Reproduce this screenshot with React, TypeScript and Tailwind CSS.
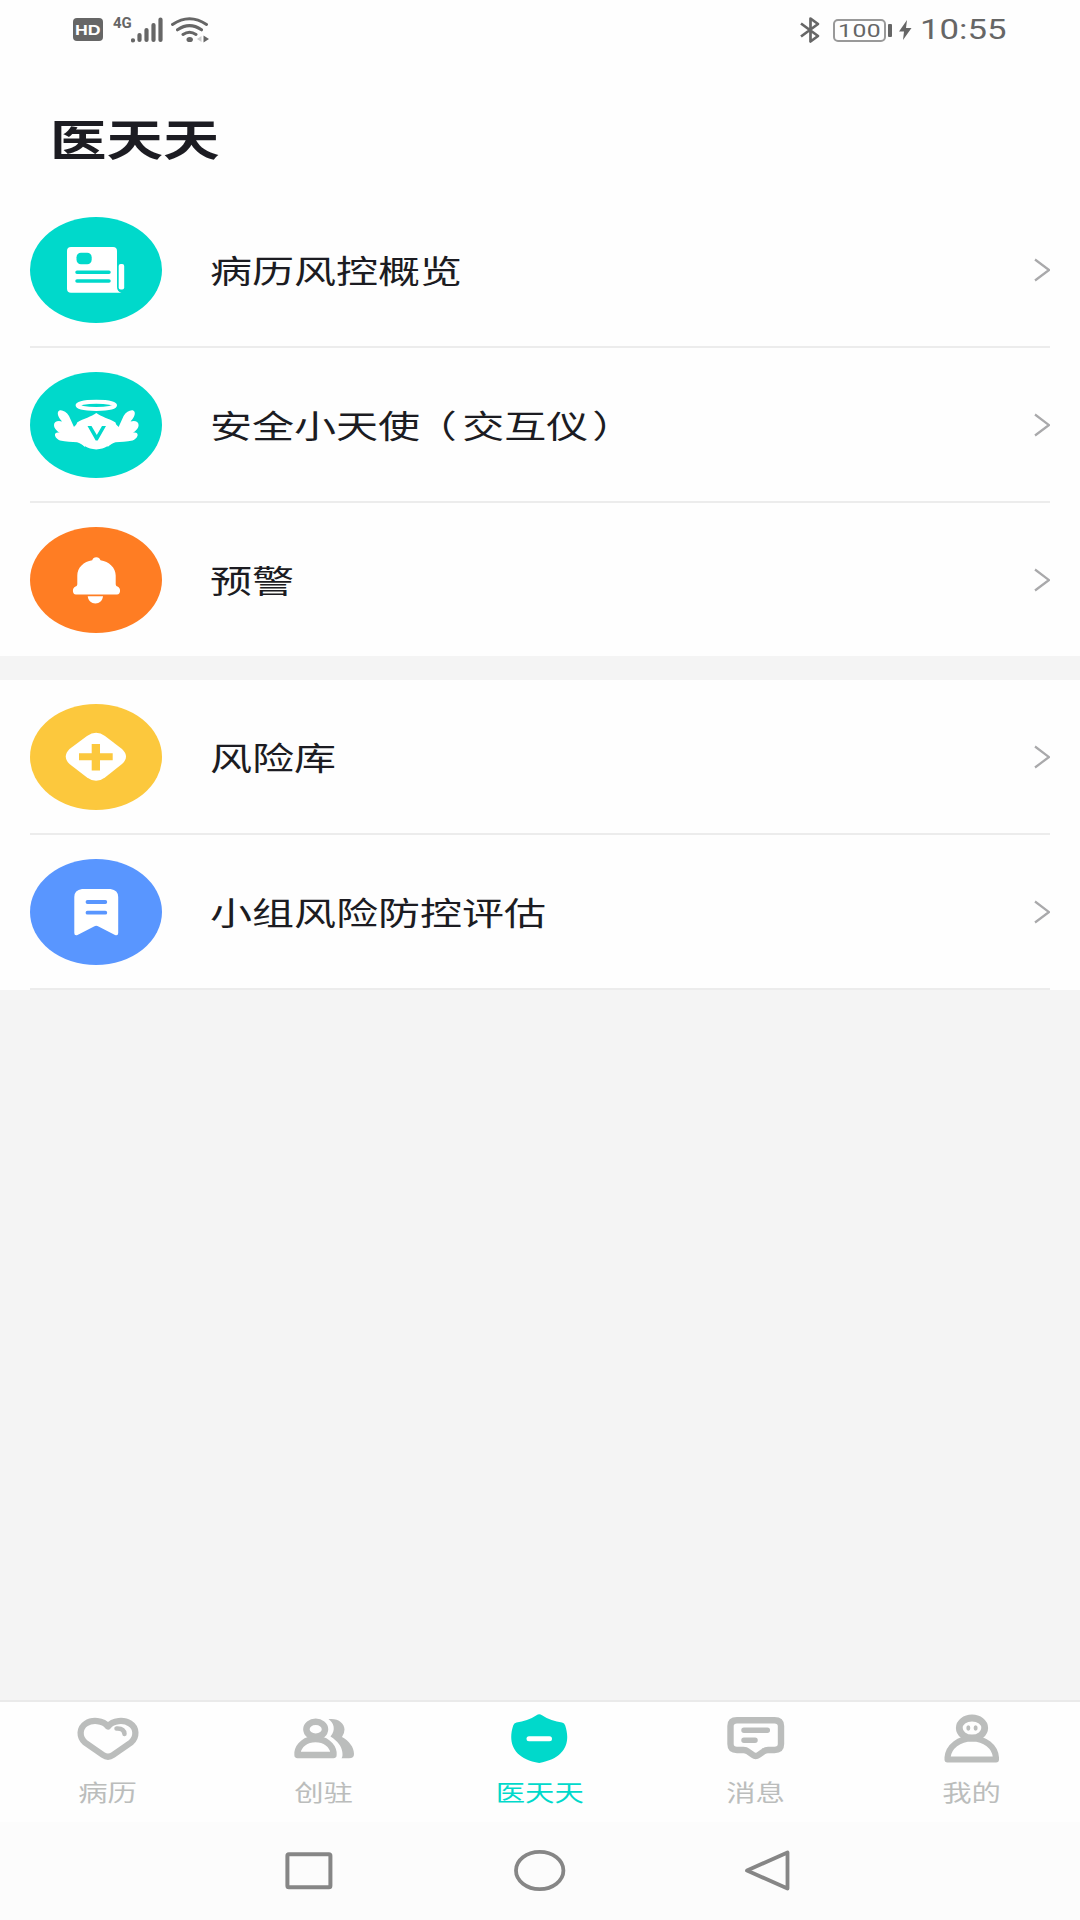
import type { ReactNode } from 'react';

const TEAL = '#00d9cb';
const GRAY = '#bbbdbc';

function DocumentIcon() {
  return (
    <>
      <path d="M41 30H83Q87 30 87 34V70Q87 74.5 91.5 75.7H41Q37 75.7 37 71.7V34Q37 30 41 30Z" fill="#fff" />
      <rect x="46.5" y="35.7" width="15.2" height="11.6" rx="4.500" fill={TEAL} />
      <path d="M47 55.3H79M47 64H79" stroke={TEAL} strokeWidth="3.500" strokeLinecap="round" />
      <rect x="88.700" y="47" width="5.500" height="25.5" rx="2" fill="#fff" />
    </>
  );
}

const WING = 'M55 49C49 50 46 52.500 44 55L39 44C36 39 29.500 36.500 28 40C27 43 29.500 46.500 32 49.500C28 48 24 49.500 24 53C24 56.500 27 59 30 61C27 60 24.500 61 25 63.500C25.500 66 28 67.500 30 68.500C36 70 42 69.500 47 70.300C50 71 52 72.500 55 75Z';

function AngelIcon() {
  return (
    <>
      <ellipse cx="66.300" cy="33.300" rx="18.700" ry="3.600" fill="none" stroke="#fff" strokeWidth="4" />
      <path d={WING} fill="#fff" />
      <path d={WING} fill="#fff" transform="translate(132.6 0) scale(-1 1)" />
      <path d="M66.3 41C71 44.8 79 46.5 85.5 50.5C90 62 84 76 66.3 77.5C48.600 76 42.600 62 47.100 50.500C53.600 46.500 61.600 44.800 66.300 41Z" fill="#fff" />
      <path d="M57.500 54H61.500L66.800 63L72 54H76L67.700 68.500H65.700Z" fill={TEAL} />
    </>
  );
}

function BellIcon() {
  return (
    <>
      <path d="M66.300 30.200C68.500 30.200 69.800 31.200 70.500 33.200C79 34.500 85.700 40.500 85.700 48.500V57C85.700 58.700 86.500 59.300 87.500 59.500C91 60.500 91 67.500 87 67.500H46C42 67.500 42 60.500 45.500 59.500C46.500 59.200 47.300 58.600 47.300 57V48.500C47.300 40.500 53.700 34.500 62.200 33.200C62.900 31.200 64 30.200 66.300 30.200Z" fill="#fff" />
      <path d="M57.700 69.300H73C72.500 73.500 69.500 76.500 65.400 76.500S58.200 73.500 57.700 69.300Z" fill="#fff" />
    </>
  );
}

function RiskIcon() {
  return (
    <>
      <path d="M57 32Q66.200 25.400 75 32L92 45Q100 52.500 92 60L75 73.500Q66.200 80.200 57 73.500L39.500 60Q32 52.500 39.500 45Z" fill="#fff" />
      <path d="M61.700 40H70V49.300H82.700V56.300H70V66.400H61.700V56.300H49V49.300H61.700Z" fill="#fcc83d" />
    </>
  );
}

function BookmarkIcon() {
  return (
    <>
      <path d="M52 30H80.500Q88.200 31 88.200 38V74Q88.200 77 85 76L68.500 67.500Q66.200 66 64 67.500L47.500 76Q44.300 77 44.300 74V38Q44.300 31 52 30Z" fill="#fff" />
      <path d="M57.500 43H75.300M57.500 53.700H75.300" stroke="#5996ff" strokeWidth="3.800" strokeLinecap="round" />
    </>
  );
}

function Row({ label, color, icon, divider = true }: { label: ReactNode; color: string; icon: ReactNode; divider?: boolean }) {
  return (
    <li className={`ml-[29.5px] mr-[30px] flex items-center ${divider ? 'h-[155px] border-b-2 border-[#ececec]' : 'h-[153px]'}`}>
      <svg className="h-[106px] w-[132px] shrink-0" viewBox="0 0 132 106" fill="none">
        <ellipse cx="66" cy="53" rx="66" ry="53" fill={color} />
        {icon}
      </svg>
      <span className="mb-[2px] ml-[48.5px] flex-1 origin-left scale-x-[1.313] whitespace-nowrap text-[32px] leading-[50px] text-[#1c1c22]">{label}</span>
      <svg className="h-6 w-4 shrink-0" viewBox="0 0 16 24" fill="none" stroke="#a9a9ab" strokeWidth="2.200">
        <path d="M1 1.500L15 12L1 22.500" />
      </svg>
    </li>
  );
}

function Tab({ label, active = false, children }: { label: string; active?: boolean; children: ReactNode }) {
  return (
    <button className={`flex flex-1 flex-col items-center pt-2 ${active ? 'text-[#00d9cb]' : 'text-[#bbbdbc]'}`}>
      <svg className="h-14 w-[72px]" viewBox="0 0 72 56" fill="none" strokeLinecap="round" strokeLinejoin="round">{children}</svg>
      <span className="mr-px mt-[7px] scale-x-[1.305] whitespace-nowrap text-[22.5px] leading-9">{label}</span>
    </button>
  );
}

function StatusBar() {
  return (
    <header className="flex h-[58px] items-center justify-between pl-[73px] pr-[75px] text-[#666]">
      <div className="flex items-center pt-px">
        <div className="flex h-[23px] w-[30px] items-center justify-center rounded-[4px] bg-[#666]">
          <span className="scale-x-[1.18] font-['Liberation_Sans'] text-[15px] font-bold leading-none text-white">HD</span>
        </div>
        <span className="-mt-[13px] ml-[10px] w-[18px] origin-left font-[Roboto] text-[15px] font-bold leading-none">4G</span>
        <svg className="h-[26px] w-[33px]" viewBox="0 0 33 26" stroke="currentColor" strokeWidth="4.200" strokeLinecap="round">
          <path d="M2 23.300V23.500M8.500 18V23M15.500 13V23M22.500 8V23M29.500 2.500V23" />
        </svg>
        <svg className="ml-[7px] h-[26px] w-[39px]" viewBox="0 0 39 26" fill="none" stroke="currentColor" strokeWidth="3" strokeLinecap="round">
          <path d="M1.500 7.500Q18.500-4 35.500 7.500M6.500 12.800Q18.500 4.500 30.500 12.800M12 17.500Q18.500 13 25 17.500" />
          <ellipse cx="18.700" cy="22.500" rx="3.200" ry="2.600" fill="currentColor" stroke="none" />
          <path d="M30.500 19V25L26 22Z" fill="#ccc" stroke="none" />
          <path d="M32.500 18.500V25.500L38 22Z" fill="currentColor" stroke="none" />
        </svg>
      </div>
      <div className="flex items-center pt-[2px]">
        <svg className="h-[28px] w-[20px]" viewBox="0 0 20 28" fill="none" stroke="currentColor" strokeWidth="2.700" strokeLinejoin="round">
          <path d="M1 7.500L18 20L10.500 25.500V2.500L18 8L1 20.500" />
        </svg>
        <div className="ml-[13px] flex h-[23px] w-[53px] items-center justify-center rounded-[5px] border-2 border-[#999]">
          <span className="scale-x-[1.300] font-[Roboto] text-[19px] leading-none tracking-[0.400px]">100</span>
        </div>
        <div className="ml-[2px] h-[13px] w-[4px] rounded-[1px] bg-[#666]" />
        <svg className="ml-[7px] h-[20px] w-[13px]" viewBox="0 0 13 20" fill="currentColor">
          <path d="M8 0L0 11.500H5L4 20L12.500 8H7Z" />
        </svg>
        <span className="ml-[8px] w-[85px] origin-left scale-x-[1.240] font-[Roboto] text-[28px] leading-none">10:55</span>
      </div>
    </header>
  );
}

export default function App() {
  return (
    <div className="flex h-[1920px] w-[1080px] flex-col overflow-hidden bg-[#f4f4f4] font-['Noto_Sans_CJK_SC',sans-serif]">
      <section className="bg-[#fefefe]">
        <StatusBar />
        <h1 className="flex h-[135px] items-center pb-[9px] pl-[50px] pt-[33px]">
          <span className="origin-left scale-x-[1.300] text-[43.5px] font-bold leading-none text-[#1c1c22]">医天天</span>
        </h1>
        <ul>
          <Row label="病历风控概览" color={TEAL} icon={<DocumentIcon />} />
          <Row
            label={
              <>
                安全小天使
                <span className="inline-block pl-3 pr-1 [font-feature-settings:'halt']">（</span>
                交互仪
                <span className="inline-block pl-[3px] [font-feature-settings:'halt']">）</span>
              </>
            }
            color={TEAL}
            icon={<AngelIcon />}
          />
          <Row label="预警" color="#ff7d23" icon={<BellIcon />} divider={false} />
        </ul>
      </section>
      <ul className="mt-6 bg-[#fefefe]">
        <Row label="风险库" color="#fcc83d" icon={<RiskIcon />} />
        <Row label="小组风险防控评估" color="#5996ff" icon={<BookmarkIcon />} />
      </ul>
      <nav className="mt-auto flex h-[122px] border-t-2 border-[#eaeaea] bg-[#fefefe]">
        <Tab label="病历">
          <path d="M36 16.500C31 10 20 9.500 14 13.500C7 18 7 27 13 32.500L31 45Q36 48.500 41 45L59 32.500C65 27 65 18 58 13.500C52 9.500 41 10 36 16.500Z" stroke={GRAY} strokeWidth="6.300" />
          <path d="M44.500 18.500Q52 18 52.500 24" stroke={GRAY} strokeWidth="4.500" />
        </Tab>
        <Tab label="创驻">
          <ellipse cx="27.700" cy="19.300" rx="9.300" ry="7.500" stroke={GRAY} strokeWidth="6.500" />
          <path d="M9.500 45V42.500C10.500 35 18 29 27.500 29S44.500 35 45.500 42.500V45Z" stroke={GRAY} strokeWidth="6.300" />
          <path d="M40.500 9.300C50 8 56.500 13.500 56.500 19.500Q56.500 23.500 54 27C61 31 66 37 66 44Q66 48.300 61 48.300H53.500Q55 46.500 54.300 42C53.500 36 50 31.500 42.500 26.500C48 20 46 13 40.500 9.300Z" fill={GRAY} />
        </Tab>
        <Tab label="医天天" active>
          <path d="M32.500 5.200Q35.200 3.500 38 5.200C44 9.300 51 11.500 58 12.500Q60.500 13 61.200 15.500C67 33 61 48.500 35.200 53C9.500 48.500 3.500 33 9.200 15.500Q10 13 12.500 12.500C19.500 11.500 26.500 9.300 32.500 5.200Z" fill={TEAL} />
          <path d="M25 28.700H45.500" stroke="#fff" strokeWidth="5" />
        </Tab>
        <Tab label="消息">
          <path d="M17 10.200H54.500Q61 10.200 61 16V34Q61 40 54.500 40H48Q45.500 40 43.500 41.500L38.500 45Q35.700 47 33 45L28 41.500Q26 40 23.500 40H17Q10.500 40 10.500 34V16Q10.500 10.200 17 10.200Z" stroke={GRAY} strokeWidth="6.400" />
          <path d="M24 20.300H47.300M24 30.300H35" stroke={GRAY} strokeWidth="5.500" />
        </Tab>
        <Tab label="我的">
          <ellipse cx="36" cy="18" rx="12.700" ry="10" stroke={GRAY} strokeWidth="6.800" />
          <path d="M11.500 49.500V47.500C12.500 36.500 23 28.500 36 28.500S59 36.500 60 47.500V49.500Z" stroke={GRAY} strokeWidth="6" />
          <ellipse cx="32.300" cy="18" rx="2" ry="2.700" fill={GRAY} />
          <ellipse cx="39.600" cy="18" rx="2" ry="2.700" fill={GRAY} />
        </Tab>
      </nav>
      <footer className="flex h-[98px] shrink-0 items-center bg-[#fcfcfc] pl-[285px]">
        <svg className="h-[42px] w-[48px]" viewBox="0 0 48 42" fill="none" stroke="#868686" strokeWidth="4">
          <rect x="2.400" y="4.300" width="43" height="33" rx="1.500" />
        </svg>
        <svg className="ml-[181px] h-[42px] w-[52px]" viewBox="0 0 52 42" fill="none" stroke="#868686" strokeWidth="3.800">
          <ellipse cx="25.700" cy="20.500" rx="23.700" ry="18.600" />
        </svg>
        <svg className="ml-[179px] h-[42px] w-[46px]" viewBox="0 0 46 42" fill="none" stroke="#868686" strokeWidth="3.800" strokeLinejoin="round">
          <path d="M42.500 2.500V38.500L2 20.500Z" />
        </svg>
      </footer>
    </div>
  );
}
